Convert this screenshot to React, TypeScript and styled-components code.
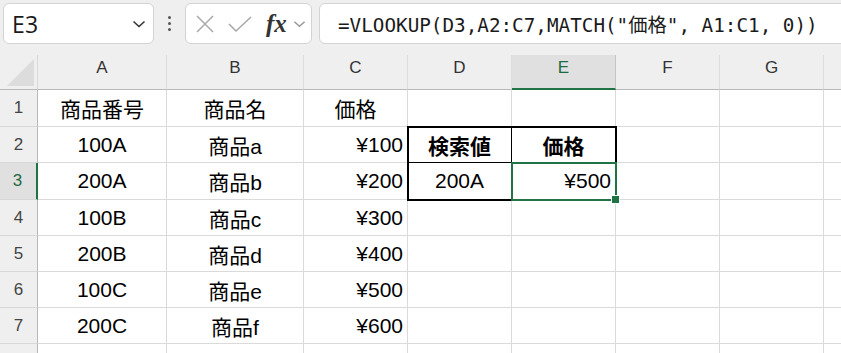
import React from "react";
import styled, { createGlobalStyle } from "styled-components";

const Global = createGlobalStyle`
  html, body { margin: 0; padding: 0; background: #efefef; overflow: hidden; }
  body { width: 841px; height: 353px; font-family: "Liberation Sans", "Noto Sans CJK JP", sans-serif; }
`;

const Page = styled.div`
  width: 841px;
  height: 353px;
  overflow: hidden;
  background: #efefef;
`;

const Toolbar = styled.div`
  height: 55px;
  display: flex;
  align-items: flex-start;
  padding: 3px 0 0 3px;
  box-sizing: border-box;
  background: #efefef;
`;

const Box = styled.div<{ $w: number }>`
  box-sizing: border-box;
  width: ${(p) => p.$w}px;
  flex: none;
  height: 41px;
  background: #fff;
  border: 1px solid #d3d3d3;
  border-radius: 6px;
  display: flex;
  align-items: center;
`;

const NameText = styled.span`
  font-family: "Open Sans", "Liberation Sans", sans-serif;
  font-size: 23px;
  color: #1a1a1a;
  padding-left: 8px;
  flex: 1;
  letter-spacing: 0.3px;
`;

const Dots = styled.div`
  width: 31px;
  flex: none;
  height: 41px;
  display: flex;
  flex-direction: column;
  align-items: center;
  justify-content: center;
  gap: 3px;
  span {
    width: 3px;
    height: 3px;
    border-radius: 50%;
    background: #555;
  }
`;

const Fx = styled.span`
  font-family: "Liberation Serif", "DejaVu Serif", serif;
  font-style: italic;
  font-weight: bold;
  font-size: 25px;
  color: #333;
  margin: 0 6px 0 14px;
  line-height: 1;
`;

const Formula = styled.span`
  font-family: "DejaVu Sans Mono", "Liberation Mono", "Noto Sans CJK JP", monospace;
  font-size: 19.3px;
  color: #1a1a1a;
  padding-left: 18px;
  white-space: nowrap;
`;

const GridWrap = styled.div`
  position: relative;
`;

const Grid = styled.div`
  display: grid;
  grid-template-columns: 38px 129px 137px 104px 104px 104px 104px 104px 104px;
  grid-template-rows: 35px 37px 36px 37px 36px 36px 36px 36px 36px;
`;

const Corner = styled.div`
  background: #efefef;
  border-right: 1px solid #d8d8d8;
  border-bottom: 1px solid #b8b8b8;
  box-sizing: border-box;
  display: flex;
  align-items: flex-end;
  justify-content: flex-end;
  padding: 0 3px 3px 0;
`;

const Triangle = styled.div`
  width: 0;
  height: 0;
  border-left: 27px solid transparent;
  border-bottom: 27px solid #dcdcdc;
`;

const ColHead = styled.div<{ $sel?: boolean }>`
  box-sizing: border-box;
  background: ${(p) => (p.$sel ? "#e0e0e0" : "#efefef")};
  border-right: 1px solid ${(p) => (p.$sel ? "#c4c4c4" : "#dcdcdc")};
  border-bottom: ${(p) => (p.$sel ? "2px solid #217346" : "1px solid #b8b8b8")};
  color: ${(p) => (p.$sel ? "#1e6b43" : "#333")};
  font-size: 17px;
  display: flex;
  align-items: center;
  justify-content: center;
  padding-bottom: ${(p) => (p.$sel ? "7px" : "8px")};
`;

const RowHead = styled.div<{ $sel?: boolean }>`
  box-sizing: border-box;
  background: ${(p) => (p.$sel ? "#e0e0e0" : "#efefef")};
  border-right: ${(p) => (p.$sel ? "2px solid #217346" : "1px solid #b8b8b8")};
  border-bottom: 1px solid #d8d8d8;
  color: ${(p) => (p.$sel ? "#1e6b43" : "#444")};
  font-size: 17px;
  display: flex;
  align-items: center;
  justify-content: center;
  padding-right: ${(p) => (p.$sel ? "1px" : "0")};
`;

const Cell = styled.div<{ $align?: "left" | "center" | "right"; $bold?: boolean }>`
  box-sizing: border-box;
  background: #fff;
  border-right: 1px solid #dadada;
  border-bottom: 1px solid #dadada;
  font-size: 21px;
  color: #000;
  font-weight: ${(p) => (p.$bold ? 700 : 400)};
  display: flex;
  align-items: center;
  justify-content: ${(p) =>
    p.$align === "right" ? "flex-end" : p.$align === "left" ? "flex-start" : "center"};
  padding: 0 4px;
  white-space: nowrap;
  overflow: hidden;
`;

const Frame = styled.div`
  position: absolute;
  box-sizing: border-box;
  border: 2px solid #000;
  display: grid;
  grid-template-columns: 103px 1fr;
  grid-template-rows: 35px 1fr;
  pointer-events: none;
`;

const FramePart = styled.div<{ $r?: boolean; $b?: boolean }>`
  border-right: ${(p) => (p.$r ? "1px solid #000" : "none")};
  border-bottom: ${(p) => (p.$b ? "1px solid #000" : "none")};
`;

const Selection = styled.div`
  position: absolute;
  box-sizing: border-box;
  border: 2px solid #217346;
  pointer-events: none;
`;

const Handle = styled.div`
  position: absolute;
  right: -5px;
  bottom: -5px;
  width: 7px;
  height: 7px;
  background: #217346;
  border: 1px solid #fff;
`;

const Chevron = ({ x, color, w = 14 }: { x: number; color: string; w?: number }) => (
  <svg width={w} height="10" viewBox="0 0 14 10" style={{ marginLeft: x }}>
    <polyline points="1.5,2.5 7,7.5 12.5,2.5" fill="none" stroke={color} strokeWidth="1.6" />
  </svg>
);

const cols = ["A", "B", "C", "D", "E", "F", "G", ""];

type Row = { a?: string; b?: string; c?: string };
const rows: Row[] = [
  { a: "商品番号", b: "商品名", c: "価格" },
  { a: "100A", b: "商品a", c: "¥100" },
  { a: "200A", b: "商品b", c: "¥200" },
  { a: "100B", b: "商品c", c: "¥300" },
  { a: "200B", b: "商品d", c: "¥400" },
  { a: "100C", b: "商品e", c: "¥500" },
  { a: "200C", b: "商品f", c: "¥600" },
  {},
];

export default function App() {
  return (
    <Page>
      <Global />
      <Toolbar>
        <Box $w={151}>
          <NameText>E3</NameText>
          <Chevron x={0} color="#333" />
          <span style={{ width: 7 }} />
        </Box>
        <Dots>
          <span />
          <span />
          <span />
        </Dots>
        <Box $w={127}>
          <svg width="20" height="18" viewBox="0 0 20 18" style={{ marginLeft: 9 }}>
            <path d="M2 1 L18 17 M18 1 L2 17" stroke="#a8a8a8" strokeWidth="1.5" fill="none" />
          </svg>
          <svg width="24" height="18" viewBox="0 0 24 18" style={{ marginLeft: 13 }}>
            <polyline points="1,9 8,16 23,2" stroke="#a8a8a8" strokeWidth="1.5" fill="none" />
          </svg>
          <Fx>fx</Fx>
          <Chevron x={0} color="#999" w={13} />
        </Box>
        <span style={{ width: 7, flex: "none" }} />
        <Box $w={560}>
          <Formula>=VLOOKUP(D3,A2:C7,MATCH("価格", A1:C1, 0))</Formula>
        </Box>
      </Toolbar>
      <GridWrap>
        <Grid>
          <Corner>
            <Triangle />
          </Corner>
          {cols.map((c, i) => (
            <ColHead key={i} $sel={c === "E"}>
              {c}
            </ColHead>
          ))}
          {rows.map((r, i) => {
            const n = i + 1;
            return (
              <React.Fragment key={n}>
                <RowHead $sel={n === 3}>{n < 8 ? n : ""}</RowHead>
                <Cell>{r.a}</Cell>
                <Cell>{r.b}</Cell>
                <Cell $align={n === 1 ? "center" : "right"}>{r.c}</Cell>
                <Cell $bold={n === 2}>{n === 2 ? "検索値" : n === 3 ? "200A" : ""}</Cell>
                <Cell $bold={n === 2} $align={n === 3 ? "right" : "center"}>
                  {n === 2 ? "価格" : n === 3 ? "¥500" : ""}
                </Cell>
                <Cell />
                <Cell />
                <Cell />
              </React.Fragment>
            );
          })}
        </Grid>
        <Frame style={{ left: 407, top: 71, width: 210, height: 75 }}>
          <FramePart $r $b />
          <FramePart $b />
          <FramePart $r />
          <FramePart />
        </Frame>
        <Selection style={{ left: 511, top: 107, width: 106, height: 39 }}>
          <Handle />
        </Selection>
      </GridWrap>
    </Page>
  );
}
